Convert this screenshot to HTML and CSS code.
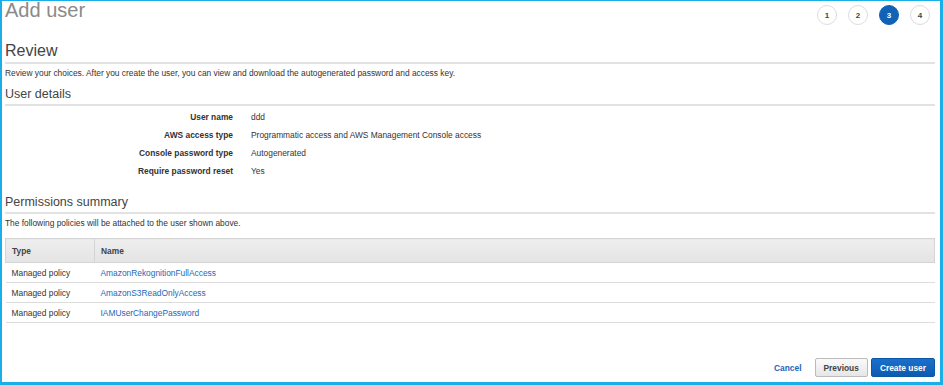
FILE: index.html
```html
<!DOCTYPE html>
<html lang="en">
<head>
    <meta charset="UTF-8">
    <title>Add user</title>
    <link rel="stylesheet" href="styles.css">
</head>
<body>
    <div class="frame">
        <div class="top">
            <h1>Add user</h1>
            <div class="steps">
                <span class="step">1</span>
                <span class="step">2</span>
                <span class="step active">3</span>
                <span class="step">4</span>
            </div>
        </div>

        <h2 class="section-title">Review</h2>
        <p class="note">Review your choices. After you create the user, you can view and download the autogenerated password and access key.</p>

        <h3 class="sub-title">User details</h3>
        <dl class="details">
            <dt>User name</dt>
            <dd>ddd</dd>
            <dt>AWS access type</dt>
            <dd>Programmatic access and AWS Management Console access</dd>
            <dt>Console password type</dt>
            <dd>Autogenerated</dd>
            <dt>Require password reset</dt>
            <dd>Yes</dd>
        </dl>

        <h3 class="sub-title">Permissions summary</h3>
        <p class="note">The following policies will be attached to the user shown above.</p>

        <table class="policies">
            <thead>
                <tr>
                    <th class="col-type">Type</th>
                    <th>Name</th>
                </tr>
            </thead>
            <tbody>
                <tr>
                    <td>Managed policy</td>
                    <td><a href="#">AmazonRekognitionFullAccess</a></td>
                </tr>
                <tr>
                    <td>Managed policy</td>
                    <td><a href="#">AmazonS3ReadOnlyAccess</a></td>
                </tr>
                <tr>
                    <td>Managed policy</td>
                    <td><a href="#">IAMUserChangePassword</a></td>
                </tr>
            </tbody>
        </table>

        <div class="actions">
            <a href="#" class="cancel">Cancel</a>
            <button class="btn">Previous</button>
            <button class="btn btn-primary">Create user</button>
        </div>
    </div>
</body>
</html>
```

FILE: styles.css
```css
* {
    margin: 0;
    padding: 0;
    box-sizing: border-box;
}

body {
    font-family: "Liberation Sans", Arial, sans-serif;
    color: #333;
    background: #fff;
}

.frame {
    height: 385px;
    border-style: solid;
    border-color: #1aafe9;
    border-width: 1px 3px 3px 2px;
    padding: 0 5px 0 3px;
    display: flex;
    flex-direction: column;
}

.top {
    display: flex;
    justify-content: space-between;
    align-items: flex-start;
    height: 40px;
}

.top h1 {
    font-size: 20px;
    font-weight: normal;
    color: #8a8a8a;
    line-height: 20px;
    margin-top: -1px;
}

.steps {
    display: flex;
    gap: 11px;
    margin-top: 4px;
    margin-right: 5px;
}

.step {
    width: 20px;
    height: 20px;
    border-radius: 50%;
    border: 1px solid #ddd;
    display: flex;
    align-items: center;
    justify-content: center;
    font-size: 8px;
    font-weight: bold;
    color: #444;
    background: #fff;
}

.step.active {
    background: #0f62b5;
    border-color: #0f62b5;
    color: #fff;
}

.section-title {
    font-size: 16px;
    font-weight: normal;
    color: #444;
    line-height: 20px;
    padding-bottom: 1px;
    border-bottom: 2px solid #e2e2e2;
}

.sub-title {
    font-size: 12.5px;
    font-weight: normal;
    color: #444;
    line-height: 16px;
    padding-bottom: 2px;
    border-bottom: 2px solid #e2e2e2;
}

.note {
    font-size: 8.4px;
    line-height: 12px;
    margin: 3px 0 7px;
}

.details {
    display: grid;
    grid-template-columns: 228px 1fr;
    column-gap: 18px;
    row-gap: 6px;
    font-size: 8.4px;
    line-height: 12px;
    margin: 5px 0 17px;
}

.details dt {
    font-weight: bold;
    text-align: right;
}

.policies {
    width: 100%;
    border-collapse: collapse;
    font-size: 8.4px;
    margin-top: 2px;
}

.policies th {
    text-align: left;
    font-weight: bold;
    height: 24px;
    padding: 0 6px;
    background: linear-gradient(#eee, #e4e4e4);
    border: 1px solid #d4d4d4;
    color: #444;
}

.policies .col-type {
    width: 89px;
}

.policies td {
    height: 20px;
    padding: 0 6px;
    border-bottom: 1px solid #ddd;
}

.policies a {
    color: #1f66b8;
    text-decoration: none;
}

.actions {
    margin-top: auto;
    margin-bottom: 5px;
    display: flex;
    justify-content: flex-end;
    align-items: center;
    gap: 3px;
}

.cancel {
    color: #1f66b8;
    font-size: 8.4px;
    font-weight: bold;
    text-decoration: none;
    margin-right: 10px;
}

.btn {
    font-family: inherit;
    font-size: 8.4px;
    font-weight: bold;
    height: 19px;
    padding: 0 8px;
    border: 1px solid #bbb;
    border-radius: 2px;
    background: linear-gradient(#fafafa, #e6e6e6);
    color: #444;
}

.btn-primary {
    background: linear-gradient(#1b6fcb, #0d5bb0);
    border-color: #0c56a6;
    color: #fff;
}
```
